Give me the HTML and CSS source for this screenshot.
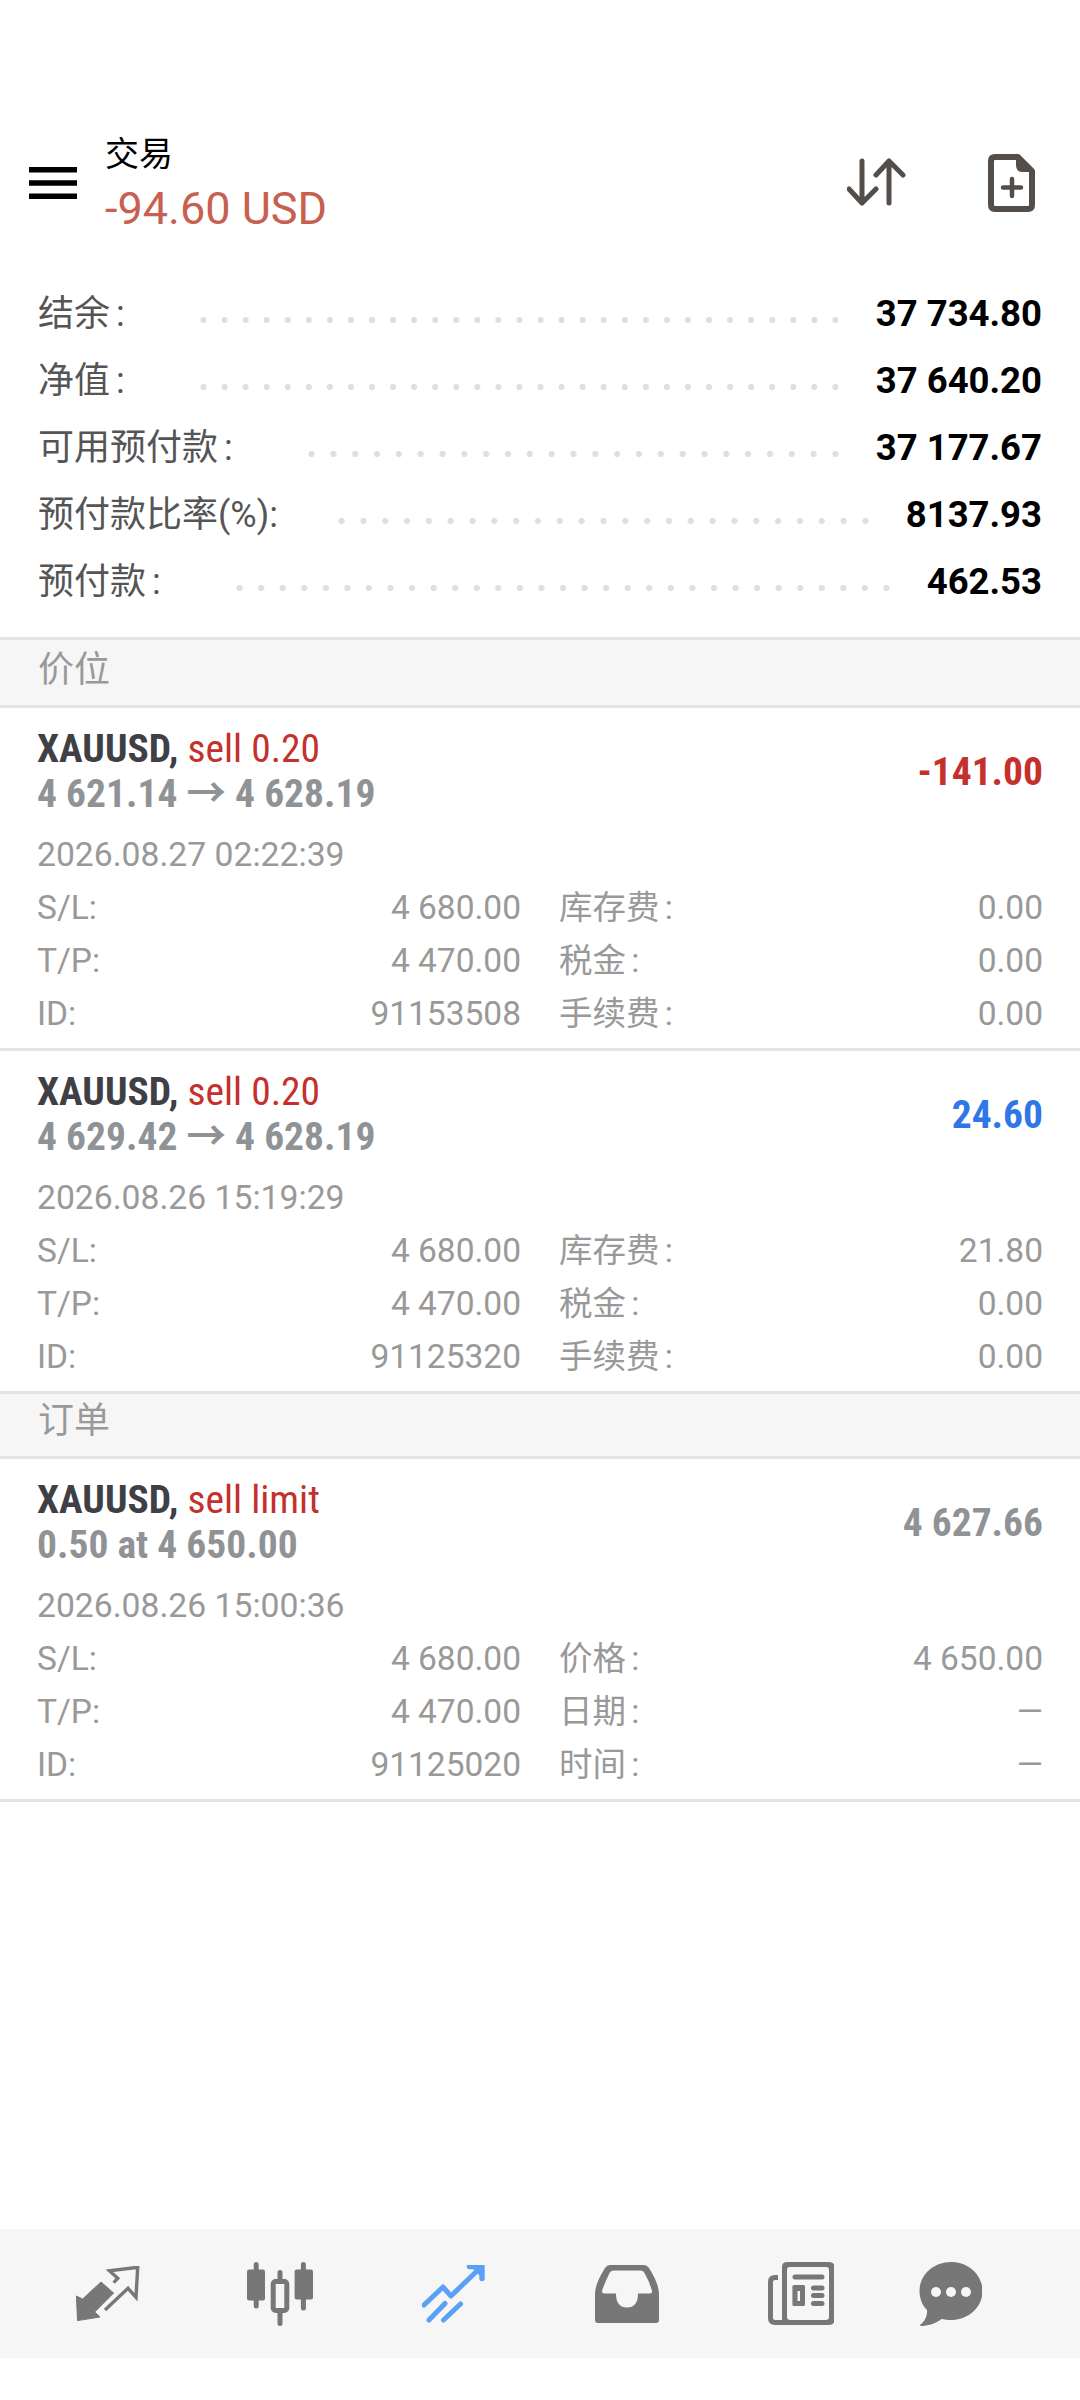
FILE: index.html
```html
<!DOCTYPE html>
<html lang="zh">
<head>
<meta charset="utf-8">
<title>交易</title>
<link rel="stylesheet" href="styles.css">
</head>
<body>
<div class="app">
  <header class="topbar">
    <svg class="burger" width="48" height="32" viewBox="0 0 48 32"><path d="M0 2.700H48M0 16H48M0 29.300H48" stroke="#000" stroke-width="5.400" fill="none"/></svg>
    <div class="heading">
      <div class="heading-title">交易</div>
      <div class="heading-profit">-94.60 USD</div>
    </div>
    <svg class="sort-icon" width="60" height="50" viewBox="0 0 60 50"><path d="M15 3V45M2 31L15 45L29 31M42 45V3M29 17L42 3L56 17" fill="none" stroke="#544e4b" stroke-width="5" stroke-linecap="round" stroke-linejoin="round"/></svg>
    <svg class="file-icon" width="47" height="58" viewBox="0 0 47 58"><path d="M7 3H30L44 17V51Q44 55 40 55H7Q3 55 3 51V7Q3 3 7 3Z" fill="none" stroke="#544e4b" stroke-width="6" stroke-linejoin="round"/><path d="M28 3L44 18H34Q28 18 28 11Z" fill="#544e4b"/><path d="M24 25V42M15 33.500H33" stroke="#544e4b" stroke-width="4.500" stroke-linecap="round"/></svg>
  </header>

  <section class="summary">
    <div class="sum-row"><span class="sum-label">结余 :</span><span class="dots"></span><span class="sum-value">37 734.80</span></div>
    <div class="sum-row"><span class="sum-label">净值 :</span><span class="dots"></span><span class="sum-value">37 640.20</span></div>
    <div class="sum-row"><span class="sum-label">可用预付款 :</span><span class="dots"></span><span class="sum-value">37 177.67</span></div>
    <div class="sum-row"><span class="sum-label">预付款比率(%):</span><span class="dots dots-near"></span><span class="sum-value">8137.93</span></div>
    <div class="sum-row"><span class="sum-label">预付款 :</span><span class="dots"></span><span class="sum-value">462.53</span></div>
  </section>

  <main class="lists">
    <div class="section-head section-first">价位</div>

    <article class="card">
      <div class="card-head">
        <div>
          <div class="line-title"><b>XAUUSD,</b> <span class="red">sell 0.20</span></div>
          <div class="line-sub">4 621.14 → 4 628.19</div>
        </div>
        <div class="amount red">-141.00</div>
      </div>
      <div class="date">2026.08.27 02:22:39</div>
      <div class="grid">
        <span>S/L:</span><span class="num">4 680.00</span><span class="cn">库存费 :</span><span class="num">0.00</span>
        <span>T/P:</span><span class="num">4 470.00</span><span class="cn">税金 :</span><span class="num">0.00</span>
        <span>ID:</span><span class="num">91153508</span><span class="cn">手续费 :</span><span class="num">0.00</span>
      </div>
    </article>

    <article class="card">
      <div class="card-head">
        <div>
          <div class="line-title"><b>XAUUSD,</b> <span class="red">sell 0.20</span></div>
          <div class="line-sub">4 629.42 → 4 628.19</div>
        </div>
        <div class="amount blue">24.60</div>
      </div>
      <div class="date">2026.08.26 15:19:29</div>
      <div class="grid">
        <span>S/L:</span><span class="num">4 680.00</span><span class="cn">库存费 :</span><span class="num">21.80</span>
        <span>T/P:</span><span class="num">4 470.00</span><span class="cn">税金 :</span><span class="num">0.00</span>
        <span>ID:</span><span class="num">91125320</span><span class="cn">手续费 :</span><span class="num">0.00</span>
      </div>
    </article>

    <div class="section-head">订单</div>

    <article class="card">
      <div class="card-head">
        <div>
          <div class="line-title"><b>XAUUSD,</b> <span class="red">sell limit</span></div>
          <div class="line-sub">0.50 at 4 650.00</div>
        </div>
        <div class="amount grey">4 627.66</div>
      </div>
      <div class="date">2026.08.26 15:00:36</div>
      <div class="grid">
        <span>S/L:</span><span class="num">4 680.00</span><span class="cn">价格 :</span><span class="num">4 650.00</span>
        <span>T/P:</span><span class="num">4 470.00</span><span class="cn">日期 :</span><span class="num">—</span>
        <span>ID:</span><span class="num">91125020</span><span class="cn">时间 :</span><span class="num">—</span>
      </div>
    </article>
  </main>

  <nav class="tabbar">
    <svg width="64" height="55" viewBox="0 0 64 55"><path d="M0.400 30L6.600 33L25 16L37.600 27L18.700 46L24 51L1.500 54.600Z" fill="#777" stroke="#777" stroke-linejoin="round"/><path d="M37.600 16.700L41.800 12.300L33.500 4.700L61.700 1.300L60 31.300L52 22.300L29 44" fill="none" stroke="#777" stroke-width="3.400"/></svg>
    <svg width="66" height="64" viewBox="0 0 66 64"><g fill="none" stroke="#777" stroke-width="5" stroke-linecap="round"><path d="M9.200 2.500V44M33 10.500V61.500M56.400 2.500V46"/></g><rect x="0" y="7.500" width="18" height="31" rx="2" fill="#777"/><rect x="47.600" y="7.500" width="18.400" height="30" rx="2" fill="#777"/><rect x="26.200" y="19.500" width="13.600" height="29" rx="2.500" fill="#f6f6f6" stroke="#777" stroke-width="5"/></svg>
    <svg width="63" height="58" viewBox="0 0 63 58"><g fill="none" stroke="#5aa0f5" stroke-width="5" stroke-linecap="round" stroke-linejoin="round"><path d="M2 40L21 22L29 31L58 3"/><path d="M47.500 1.500H60V13.500" stroke-width="5.400"/><path d="M7 55L23 38.500M21.500 55L38.500 39"/></g><path d="M48 1H61V14Z" fill="#5aa0f5"/></svg>
    <svg width="64" height="58" viewBox="0 0 64 58"><path fill="#777" fill-rule="evenodd" d="M15 0H49Q52 0 54 3Q64 19 64 29V55Q64 58 61 58H3Q0 58 0 55V29Q0 19 10 3Q12 0 15 0ZM18.500 5.500Q15.500 5.500 14.500 8Q8 22 7 26Q7 28.500 9.500 28.500H21Q21 42.500 32 42.500Q43 42.500 43 28.500H55Q57.500 28.500 57 26Q55 18 49.500 8Q48.500 5.500 46 5.500Z"/></svg>
    <svg width="66" height="63" viewBox="0 0 66 63"><path fill="#777" fill-rule="evenodd" d="M19 0H61Q66.400 0 66.400 5V58Q66.400 63 61 63H14V5Q14 0 19 0ZM22 5Q19 5 19 8V55Q19 58 22 58H58Q61 58 61 55V8Q61 5 58 5Z"/><path d="M10 15.500H7Q2.500 15.500 2.500 20V56Q2.500 60.500 7 60.500H15" fill="none" stroke="#777" stroke-width="5"/><path d="M27 15H54M45.500 26H54M45.500 33.500H54M45.500 41.500H54" fill="none" stroke="#777" stroke-width="5" stroke-linecap="round"/><path fill="#777" fill-rule="evenodd" d="M26 23H35.500Q37 23 37 24.500V42.500Q37 44 35.500 44H26Q24.400 44 24.400 42.500V24.500Q24.400 23 26 23ZM29.500 29V39H32V29Z"/></svg>
    <svg width="63" height="64" viewBox="0 0 63 64"><path fill="#777" d="M32 0C49.500 0 63.500 13 63.500 29C63.500 45 49.500 58 32 58C28.500 58 25.500 57.500 22.500 57C16 62 8 64 2 64C0.500 64 0.500 63 1.500 62.500C6 59 8.500 53.500 8 48C3 43 0.500 36 0.500 29C0.500 13 14.500 0 32 0Z"/><g fill="#f6f6f6"><circle cx="17" cy="30" r="5"/><circle cx="32" cy="30" r="5"/><circle cx="47" cy="30" r="5"/></g></svg>
  </nav>
  <div class="bottom-gap"></div>
</div>
</body>
</html>
```

FILE: styles.css
```css
* { box-sizing: border-box; }
html, body { margin: 0; padding: 0; background: #fff; }
body { font-family: Roboto, "Noto Sans CJK SC", sans-serif; }
.app { width: 1080px; height: 2400px; display: flex; flex-direction: column; padding-top: 130px; }

.topbar { height: 106px; display: flex; align-items: center; padding-left: 29px; flex: none; }
.burger { flex: none; margin-right: 28px; }
.heading { flex: 1; padding-top: 3px; }
.heading-title { font-size: 34px; line-height: 48px; color: #000; }
.heading-profit { font-size: 45px; line-height: 62px; color: #c8604f; }
.sort-icon { flex: none; margin-right: 81px; }
.file-icon { flex: none; margin-right: 45px; }

.summary { padding: 42px 38px 0; flex: none; }
.sum-row { height: 67px; display: flex; align-items: center; }
.sum-label { font-size: 36px; color: #555; flex: none; padding-bottom: 4px; word-spacing: -3px; }
.dots { flex: 1; height: 8px; margin: 16px 30px 0 68px; background-image: radial-gradient(circle at center, #dfdfdf 2.800px, transparent 3.400px); background-size: 21px 8px; background-repeat: space no-repeat; }
.dots-near { margin-left: 53px; }
.sum-value { font-size: 36.500px; font-weight: 700; color: #000; flex: none; padding-top: 3px; }

.lists { flex: 1; padding-top: 24px; }
.section-head { height: 65px; line-height: 54px; padding-left: 38px; font-size: 36px; color: #999; background: #f6f6f6; border-bottom: 3px solid #e4e4e4; }
.section-first { height: 71px; line-height: 60px; border-top: 3px solid #e4e4e4; }

.card { padding: 18px 37px 8px; border-bottom: 3px solid #e4e4e4; }
.card-head { display: flex; justify-content: space-between; align-items: center; }
.line-title { font-size: 39.500px; line-height: 45px; font-stretch: 75%; color: #444; }
.line-title b { font-weight: 700; color: #3f3f46; }
.line-sub { font-size: 39.500px; line-height: 45px; font-weight: 700; font-stretch: 75%; color: #909396; }
.amount { font-size: 39.500px; font-weight: 700; font-stretch: 75%; }
.red { color: #c4302b; }
.blue { color: #2f76e6; }
.grey { color: #909396; }
.date { margin-top: 12px; font-size: 33.700px; line-height: 53px; color: #999; }
.grid { display: grid; grid-template-columns: 120px 364px 1fr auto; font-size: 33.500px; line-height: 53px; color: #999; }
.cn { padding-left: 38px; word-spacing: -3px; }
.num { text-align: right; }

.tabbar { flex: none; height: 129px; background: #f6f6f6; display: grid; grid-template-columns: 171px 175px 173px 173px 151px 63px; align-items: center; padding-left: 76px; }
.bottom-gap { height: 42px; flex: none; }
```
